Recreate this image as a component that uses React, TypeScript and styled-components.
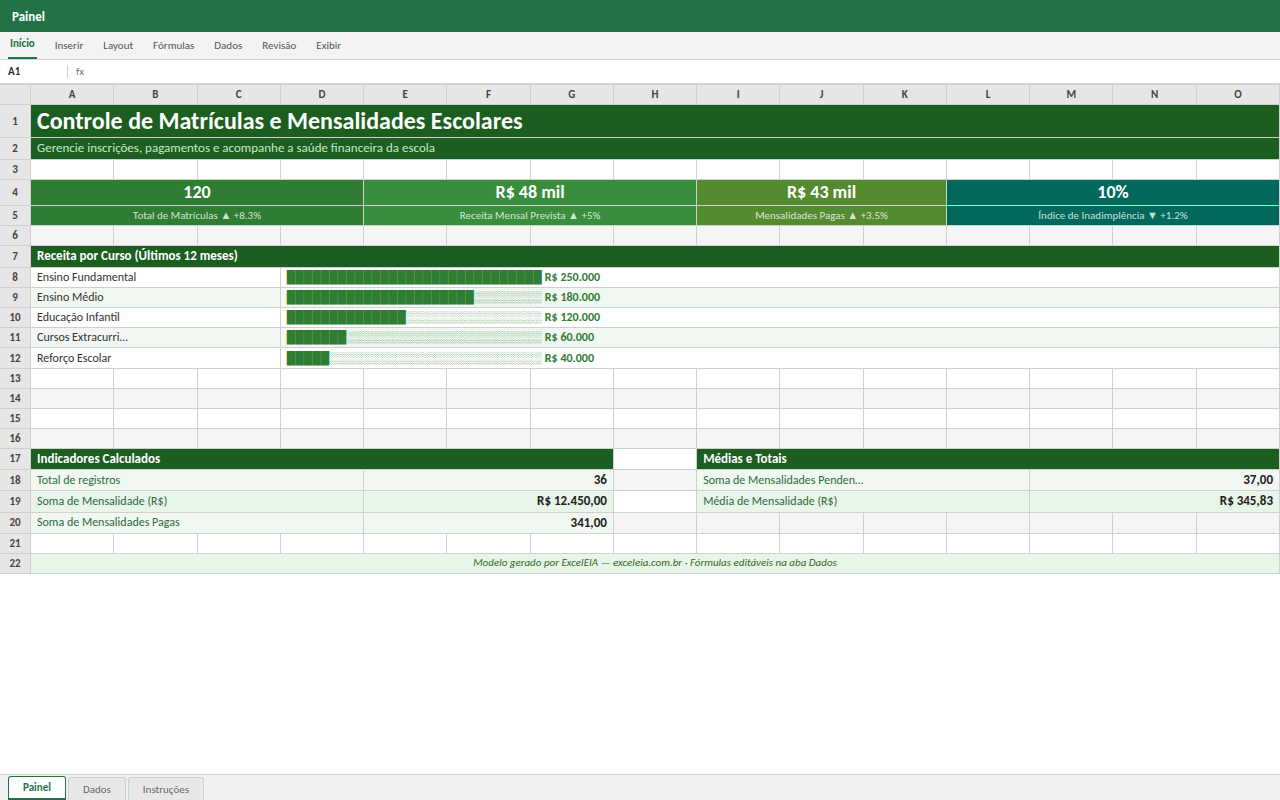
import styled, { createGlobalStyle } from 'styled-components';

const GlobalStyle = createGlobalStyle`
    html, body {
        margin: 0;
        height: 100%;
    }
    body {
        font-family: Carlito, Calibri, Lato, sans-serif;
        background: #fff;
    }
    * {
        box-sizing: border-box;
    }
`;

const Page = styled.div`
    display: flex;
    flex-direction: column;
    height: 800px;
    overflow: hidden;
`;

const TitleBar = styled.div`
    display: flex;
    align-items: center;
    height: 32px;
    padding: 0 12px;
    background: #217346;
    color: #fff;
    font-size: 13px;
    font-weight: 700;
`;

const Ribbon = styled.div`
    display: flex;
    gap: 16px;
    height: 28px;
    padding: 0 8px;
    background: #f3f3f3;
    border-bottom: 1px solid #d4d4d4;
`;

const RibbonTab = styled.div<{ $active?: boolean }>`
    display: flex;
    align-items: center;
    padding: 0 2px ${(p) => (p.$active ? '2px' : '0')};
    height: 27px;
    font-size: 11px;
    font-weight: ${(p) => (p.$active ? 700 : 400)};
    color: ${(p) => (p.$active ? '#217346' : '#555')};
    border-bottom: ${(p) => (p.$active ? '2px solid #217346' : 'none')};
`;

const FormulaBar = styled.div`
    display: flex;
    align-items: center;
    height: 24px;
    background: #fff;
    border-bottom: 1px solid #d4d4d4;
`;

const CellName = styled.div`
    width: 68px;
    height: 13px;
    padding-left: 8px;
    line-height: 13px;
    font-size: 11px;
    font-weight: 700;
    color: #333;
    border-right: 1px solid #d4d4d4;
`;

const Fx = styled.div`
    padding-left: 8px;
    font-size: 11px;
    color: #777;
`;

const Sheet = styled.div`
    display: grid;
    grid-template-columns: 31px repeat(15, 1fr);
    grid-template-rows:
        20px 33px 21.6px 20.45px 26px 20px 19.97px
        21.6px 20.2px 20.2px 20.2px 20.2px 20.7px 19.95px 20px 20px 20px
        21px 21.33px 21.33px 21.36px 20px 20px;
    border-top: 1px solid #d0d0d0;
    flex: none;
`;

const Cell = styled.div<{ $span?: number; $bg?: string }>`
    grid-column: span ${(p) => p.$span ?? 1};
    display: flex;
    align-items: center;
    min-width: 0;
    padding: 0 6px 1px;
    white-space: nowrap;
    overflow: hidden;
    background: ${(p) => p.$bg ?? '#fff'};
    border-right: 1px solid #d0d0d0;
    border-bottom: 1px solid #d0d0d0;
    font-size: 12px;
    color: #333;
`;

const Corner = styled(Cell)`
    background: #e6e6e6;
`;

const ColHead = styled(Cell)`
    justify-content: center;
    padding: 0 6px;
    background: #e6e6e6;
    font-size: 11px;
    font-weight: 700;
    color: #444;
`;

const RowHead = styled(ColHead)``;

const Title = styled(Cell)`
    background: #1b5e20;
    color: #fff;
    font-size: 24px;
    font-weight: 700;
`;

const Subtitle = styled(Cell)`
    background: #1b5e20;
    color: #c8e6c9;
    font-size: 13px;
`;

const KpiValue = styled(Cell)`
    justify-content: center;
    color: #fff;
    font-size: 18px;
    font-weight: 700;
`;

const KpiLabel = styled(Cell)`
    justify-content: center;
    color: rgba(255, 255, 255, 0.8);
    font-size: 11px;
`;

const Section = styled(Cell)`
    background: #1b5e20;
    color: #fff;
    font-size: 13px;
    font-weight: 700;
`;

const BarText = styled.span`
    font-size: 12px;
    color: #2e7d32;
`;

const BarValue = styled.span`
    margin-left: 3px;
    font-size: 12px;
    font-weight: 700;
    color: #2e7d32;
`;

const MetricLabel = styled(Cell)`
    color: #2e6b3a;
`;

const MetricValue = styled(Cell)`
    justify-content: flex-end;
    font-size: 13px;
    font-weight: 700;
    color: #222;
`;

const Footer = styled(Cell)`
    justify-content: center;
    background: #e8f5e9;
    color: #33691e;
    font-size: 11px;
    font-style: italic;
`;

const Spacer = styled.div`
    flex: 1;
`;

const TabBar = styled.div`
    display: flex;
    align-items: flex-end;
    gap: 2px;
    height: 26px;
    padding: 0 8px;
    background: #f0f0f0;
    border-top: 1px solid #d4d4d4;
`;

const SheetTab = styled.div<{ $active?: boolean }>`
    display: flex;
    align-items: center;
    justify-content: center;
    height: ${(p) => (p.$active ? '24px' : '23px')};
    padding: 0 14px;
    border-radius: 3px 3px 0 0;
    border: 1px solid ${(p) => (p.$active ? '#217346' : '#d0d0d0')};
    border-bottom: ${(p) => (p.$active ? '2px solid #217346' : 'none')};
    background: ${(p) => (p.$active ? '#fff' : '#e8e8e8')};
    color: ${(p) => (p.$active ? '#217346' : '#666')};
    font-size: 11px;
    font-weight: ${(p) => (p.$active ? 700 : 400)};
`;

const COLUMNS = 'ABCDEFGHIJKLMNO'.split('');
const WHITE = '#fff';
const GREY = '#f5f5f5';
const ALT = '#f1f8f2';
const MINT = '#e8f5e9';

const BARS = [
    { name: 'Ensino Fundamental', filled: 30, value: 'R$ 250.000', bg: WHITE },
    { name: 'Ensino Médio', filled: 22, value: 'R$ 180.000', bg: ALT },
    { name: 'Educação Infantil', filled: 14, value: 'R$ 120.000', bg: WHITE },
    { name: 'Cursos Extracurri…', filled: 7, value: 'R$ 60.000', bg: ALT },
    { name: 'Reforço Escolar', filled: 5, value: 'R$ 40.000', bg: WHITE },
];

const KPIS = [
    { value: '120', label: 'Total de Matrículas ▲ +8.3%', span: 4, bg: '#2e7d32' },
    { value: 'R$ 48 mil', label: 'Receita Mensal Prevista ▲ +5%', span: 4, bg: '#388e3c' },
    { value: 'R$ 43 mil', label: 'Mensalidades Pagas ▲ +3.5%', span: 3, bg: '#558b2f' },
    { value: '10%', label: 'Índice de Inadimplência ▼ +1.2%', span: 4, bg: '#00695c' },
];

const EmptyRow = ({ n, bg }: { n: number; bg: string }) => (
    <>
        <RowHead>{n}</RowHead>
        {COLUMNS.map((c) => (
            <Cell key={c} $bg={bg} />
        ))}
    </>
);

const Row = ({ n, bar }: { n: number; bar: (typeof BARS)[number] }) => (
    <>
        <RowHead>{n}</RowHead>
        <Cell $span={3} $bg={bar.bg}>{bar.name}</Cell>
        <Cell $span={12} $bg={bar.bg}>
            <BarText>{'█'.repeat(bar.filled) + '░'.repeat(30 - bar.filled)}</BarText>
            <BarValue>{bar.value}</BarValue>
        </Cell>
    </>
);

const App = () => {
    return (
        <Page>
            <GlobalStyle />
            <TitleBar>Painel</TitleBar>
            <Ribbon>
                <RibbonTab $active>Início</RibbonTab>
                {['Inserir', 'Layout', 'Fórmulas', 'Dados', 'Revisão', 'Exibir'].map((t) => (
                    <RibbonTab key={t}>{t}</RibbonTab>
                ))}
            </Ribbon>
            <FormulaBar>
                <CellName>A1</CellName>
                <Fx>fx</Fx>
            </FormulaBar>
            <Sheet>
                <Corner />
                {COLUMNS.map((c) => (
                    <ColHead key={c}>{c}</ColHead>
                ))}

                <RowHead>1</RowHead>
                <Title $span={15}>Controle de Matrículas e Mensalidades Escolares</Title>
                <RowHead>2</RowHead>
                <Subtitle $span={15}>Gerencie inscrições, pagamentos e acompanhe a saúde financeira da escola</Subtitle>
                <EmptyRow n={3} bg={WHITE} />

                <RowHead>4</RowHead>
                {KPIS.map((k) => (
                    <KpiValue key={k.value} $span={k.span} $bg={k.bg}>
                        {k.value}
                    </KpiValue>
                ))}
                <RowHead>5</RowHead>
                {KPIS.map((k) => (
                    <KpiLabel key={k.label} $span={k.span} $bg={k.bg}>
                        {k.label}
                    </KpiLabel>
                ))}
                <EmptyRow n={6} bg={GREY} />

                <RowHead>7</RowHead>
                <Section $span={15}>Receita por Curso (Últimos 12 meses)</Section>
                {BARS.map((b, i) => (
                    <Row key={b.name} n={i + 8} bar={b} />
                ))}
                <EmptyRow n={13} bg={WHITE} />
                <EmptyRow n={14} bg={GREY} />
                <EmptyRow n={15} bg={WHITE} />
                <EmptyRow n={16} bg={GREY} />

                <RowHead>17</RowHead>
                <Section $span={7}>Indicadores Calculados</Section>
                <Cell />
                <Section $span={7}>Médias e Totais</Section>

                <RowHead>18</RowHead>
                <MetricLabel $span={4} $bg={ALT}>Total de registros</MetricLabel>
                <MetricValue $span={3} $bg={ALT}>36</MetricValue>
                <Cell $bg={GREY} />
                <MetricLabel $span={4} $bg={ALT}>Soma de Mensalidades Penden…</MetricLabel>
                <MetricValue $span={3} $bg={ALT}>37,00</MetricValue>

                <RowHead>19</RowHead>
                <MetricLabel $span={4} $bg={MINT}>Soma de Mensalidade (R$)</MetricLabel>
                <MetricValue $span={3} $bg={MINT}>R$ 12.450,00</MetricValue>
                <Cell />
                <MetricLabel $span={4} $bg={MINT}>Média de Mensalidade (R$)</MetricLabel>
                <MetricValue $span={3} $bg={MINT}>R$ 345,83</MetricValue>

                <RowHead>20</RowHead>
                <MetricLabel $span={4} $bg={ALT}>Soma de Mensalidades Pagas</MetricLabel>
                <MetricValue $span={3} $bg={ALT}>341,00</MetricValue>
                {COLUMNS.slice(7).map((c) => (
                    <Cell key={c} $bg={GREY} />
                ))}

                <EmptyRow n={21} bg={WHITE} />
                <RowHead>22</RowHead>
                <Footer $span={15}>Modelo gerado por ExcelEIA — exceleia.com.br · Fórmulas editáveis na aba Dados</Footer>
            </Sheet>
            <Spacer />
            <TabBar>
                <SheetTab $active>Painel</SheetTab>
                <SheetTab>Dados</SheetTab>
                <SheetTab>Instruções</SheetTab>
            </TabBar>
        </Page>
    );
};

export default App;
